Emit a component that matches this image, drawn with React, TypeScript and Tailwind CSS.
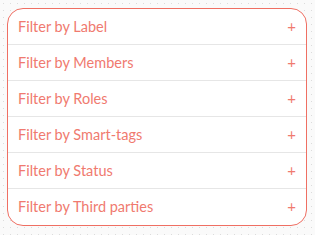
import React from 'react'

const filters = ['Label', 'Members', 'Roles', 'Smart-tags', 'Status', 'Third parties']

export default function App() {
  return (
    <div className="w-[315px] h-[235px] bg-[#fafafa] bg-[radial-gradient(#dcdcdc_0.8px,transparent_0.8px)] bg-[size:7px_7px] pl-[7px] pt-[8px]">
      <div
        className="w-[300px] rounded-[16px] border border-[#ef6f63] bg-white overflow-hidden"
        style={{ fontFamily: 'Lato, "Open Sans", sans-serif' }}
      >
        {filters.map((name, i) => (
          <div
            key={name}
            className={`flex items-center justify-between h-[36px] pl-[10px] pr-[10px] border-b text-[#f07a6f] ${
              i < filters.length - 1 ? 'border-[#e6e6e6]' : 'border-transparent'
            }`}
          >
            <span className="text-[14.5px]">Filter by {name}</span>
            <span className="text-[15px] leading-none">+</span>
          </div>
        ))}
      </div>
    </div>
  )
}
